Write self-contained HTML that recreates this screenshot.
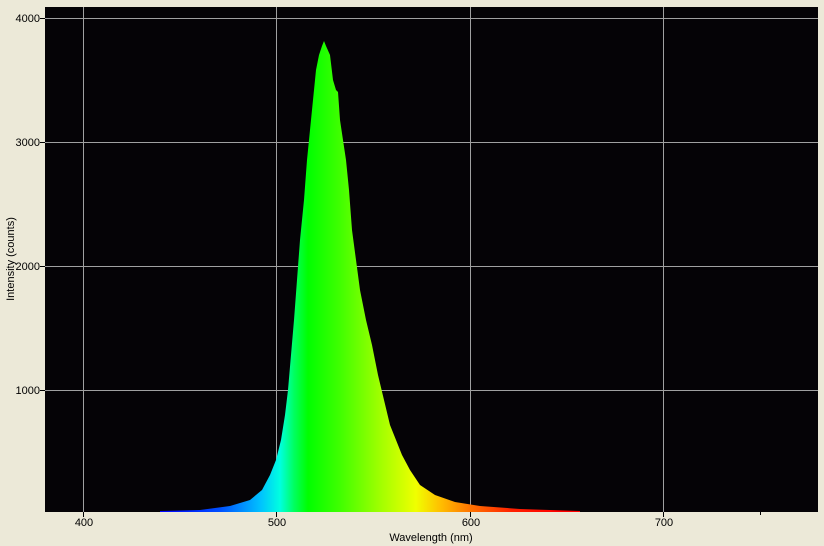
<!DOCTYPE html>
<html><head><style>
body{margin:0;width:824px;height:546px;background:#ece9d8;overflow:hidden;font-family:"Liberation Sans",sans-serif;}
</style></head><body>
<svg width="824" height="546" xmlns="http://www.w3.org/2000/svg" style="position:absolute;left:0;top:0">
<defs>
<linearGradient id="g" gradientUnits="userSpaceOnUse" x1="160" y1="0" x2="560" y2="0">
<stop offset="0" stop-color="#0000ff"/>
<stop offset="0.15" stop-color="#0050ff"/>
<stop offset="0.25" stop-color="#00c0ff"/>
<stop offset="0.3" stop-color="#00ffe0"/>
<stop offset="0.335" stop-color="#00ff60"/>
<stop offset="0.37" stop-color="#00ff00"/>
<stop offset="0.45" stop-color="#40ff00"/>
<stop offset="0.55" stop-color="#a0ff00"/>
<stop offset="0.64" stop-color="#f0ff00"/>
<stop offset="0.7" stop-color="#ffc000"/>
<stop offset="0.78" stop-color="#ff7000"/>
<stop offset="0.88" stop-color="#ff2000"/>
<stop offset="1" stop-color="#ff0000"/>
</linearGradient>
</defs>
<rect x="45" y="7" width="773" height="505" fill="#050306"/>
<g stroke="#a0a0a0" stroke-width="1">
<line x1="83.5" y1="7" x2="83.5" y2="512"/>
<line x1="276.5" y1="7" x2="276.5" y2="512"/>
<line x1="470.5" y1="7" x2="470.5" y2="512"/>
<line x1="663.5" y1="7" x2="663.5" y2="512"/>
<line x1="45" y1="18.5" x2="818" y2="18.5"/>
<line x1="45" y1="142.5" x2="818" y2="142.5"/>
<line x1="45" y1="266.5" x2="818" y2="266.5"/>
<line x1="45" y1="390.5" x2="818" y2="390.5"/>
</g>
<polygon fill="url(#g)" points="160,511 200,510 230,506 250,500 262,490 270,475 276,460 281,440 285,415 288,390 291,355 294,320 297,280 300,240 304,200 307,160 310,130 313,100 316,70 319,55 322,46 324,41 326,46 330,55 333,80 336,90 338,92 340,120 343,140 346,160 349,190 352,230 356,260 360,290 366,320 372,345 378,375 384,400 390,425 396,440 402,455 410,470 420,485 435,495 455,502 480,506 520,509 580,511 580,512 160,512"/>
<g stroke="#000" stroke-width="1">
<line x1="40" y1="18.5" x2="45" y2="18.5"/>
<line x1="40" y1="142.5" x2="45" y2="142.5"/>
<line x1="40" y1="266.5" x2="45" y2="266.5"/>
<line x1="40" y1="390.5" x2="45" y2="390.5"/>
<line x1="83.5" y1="512" x2="83.5" y2="517"/>
<line x1="276.5" y1="512" x2="276.5" y2="517"/>
<line x1="470.5" y1="512" x2="470.5" y2="517"/>
<line x1="663.5" y1="512" x2="663.5" y2="517"/>
<line x1="760.5" y1="512" x2="760.5" y2="515"/>
</g>
<g font-size="11" fill="#000" text-anchor="end">
<text x="40" y="22">4000</text>
<text x="40" y="146">3000</text>
<text x="40" y="270">2000</text>
<text x="40" y="394">1000</text>
</g>
<g font-size="11" fill="#000" text-anchor="middle">
<text x="84" y="526">400</text>
<text x="277" y="526">500</text>
<text x="471" y="526">600</text>
<text x="664" y="526">700</text>
<text x="431" y="541">Wavelength (nm)</text>
</g>
<text font-size="11" fill="#000" text-anchor="middle" transform="translate(14,259) rotate(-90)">Intensity (counts)</text>
</svg>
</body></html>
